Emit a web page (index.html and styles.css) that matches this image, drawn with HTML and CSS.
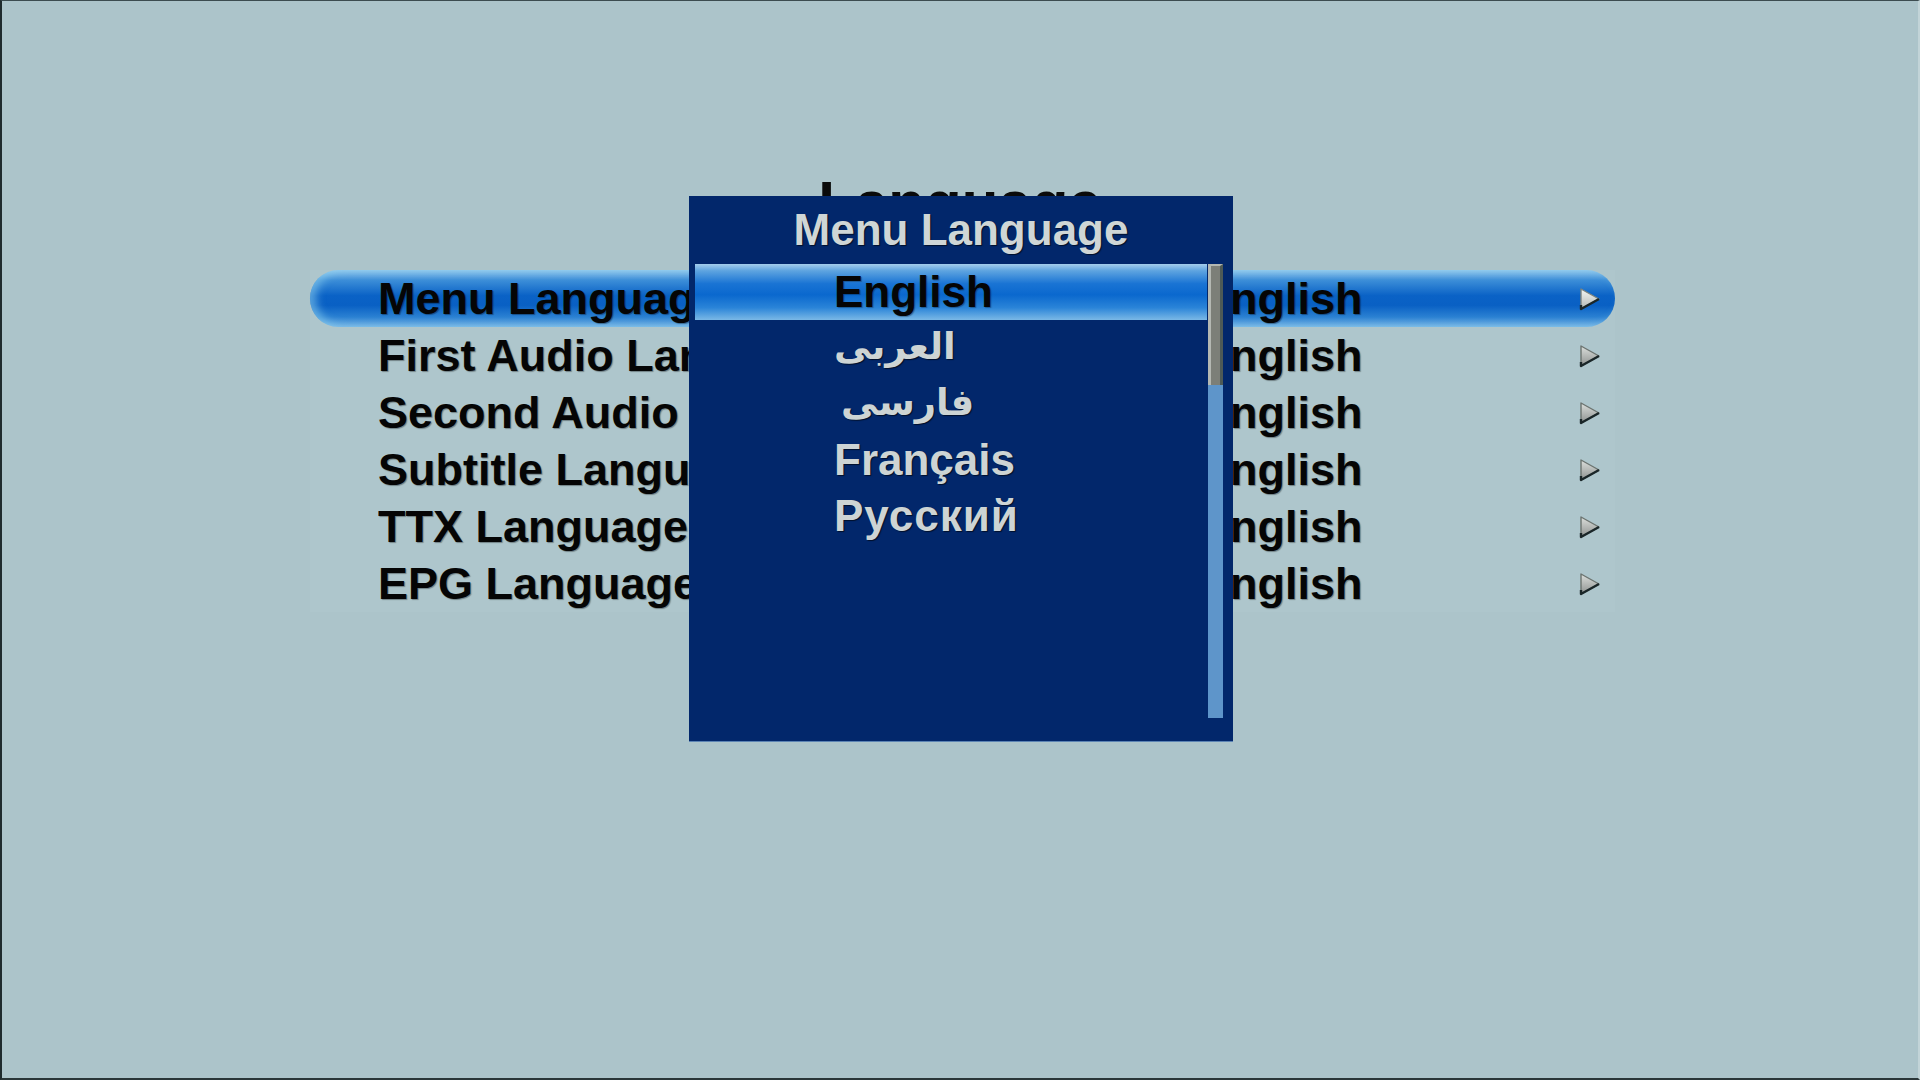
FILE: index.html
```html
<!DOCTYPE html>
<html lang="en">
<head>
<meta charset="utf-8">
<title>Language</title>
<link rel="stylesheet" href="styles.css">
</head>
<body>
<div class="screen">
  <h1 class="title">Language</h1>
  <div class="panel">
    <div class="row selected">
      <span class="label">Menu Language</span>
      <span class="value">English</span>
      <svg class="arrow" viewBox="0 0 24 26" width="24" height="26"><defs><linearGradient id="ag1" x1="0" y1="0" x2="0" y2="1"><stop offset="0" stop-color="#f4f6f4"/><stop offset="1" stop-color="#b4b8b4"/></linearGradient></defs><path d="M3 3 L21 13 L3 23 Z" fill="url(#ag1)" stroke="#7c8480" stroke-width="1.4" stroke-linejoin="round"/><path d="M21 13 L3 23 L3 19" fill="none" stroke="#1a2628" stroke-width="2.4" stroke-linejoin="round"/></svg>
    </div>
    <div class="row">
      <span class="label">First Audio Language</span>
      <span class="value">English</span>
      <svg class="arrow" viewBox="0 0 24 26" width="24" height="26"><defs><linearGradient id="ag2" x1="0" y1="0" x2="0" y2="1"><stop offset="0" stop-color="#dcdfdc"/><stop offset="1" stop-color="#8e9290"/></linearGradient></defs><path d="M3 3 L21 13 L3 23 Z" fill="url(#ag2)" stroke="#6c7470" stroke-width="1.4" stroke-linejoin="round"/><path d="M21 13 L3 23 L3 19" fill="none" stroke="#1a2628" stroke-width="2.4" stroke-linejoin="round"/></svg>
    </div>
    <div class="row">
      <span class="label">Second Audio Language</span>
      <span class="value">English</span>
      <svg class="arrow" viewBox="0 0 24 26" width="24" height="26"><path d="M3 3 L21 13 L3 23 Z" fill="url(#ag2)" stroke="#6c7470" stroke-width="1.4" stroke-linejoin="round"/><path d="M21 13 L3 23 L3 19" fill="none" stroke="#1a2628" stroke-width="2.4" stroke-linejoin="round"/></svg>
    </div>
    <div class="row">
      <span class="label">Subtitle Language</span>
      <span class="value">English</span>
      <svg class="arrow" viewBox="0 0 24 26" width="24" height="26"><path d="M3 3 L21 13 L3 23 Z" fill="url(#ag2)" stroke="#6c7470" stroke-width="1.4" stroke-linejoin="round"/><path d="M21 13 L3 23 L3 19" fill="none" stroke="#1a2628" stroke-width="2.4" stroke-linejoin="round"/></svg>
    </div>
    <div class="row">
      <span class="label">TTX Language</span>
      <span class="value">English</span>
      <svg class="arrow" viewBox="0 0 24 26" width="24" height="26"><path d="M3 3 L21 13 L3 23 Z" fill="url(#ag2)" stroke="#6c7470" stroke-width="1.4" stroke-linejoin="round"/><path d="M21 13 L3 23 L3 19" fill="none" stroke="#1a2628" stroke-width="2.4" stroke-linejoin="round"/></svg>
    </div>
    <div class="row">
      <span class="label">EPG Language</span>
      <span class="value">English</span>
      <svg class="arrow" viewBox="0 0 24 26" width="24" height="26"><path d="M3 3 L21 13 L3 23 Z" fill="url(#ag2)" stroke="#6c7470" stroke-width="1.4" stroke-linejoin="round"/><path d="M21 13 L3 23 L3 19" fill="none" stroke="#1a2628" stroke-width="2.4" stroke-linejoin="round"/></svg>
    </div>
  </div>

  <div class="popup">
    <div class="popup-title">Menu Language</div>
    <div class="popup-body">
      <ul class="options">
        <li class="option active">English</li>
        <li class="option arabic"><span dir="rtl">العربى</span></li>
        <li class="option arabic farsi"><span dir="rtl">فارسى</span></li>
        <li class="option">Français</li>
        <li class="option russian">Русский</li>
      </ul>
      <div class="scrollbar"><div class="thumb"></div></div>
    </div>
  </div>
</div>
</body>
</html>
```
FILE: styles.css
```css
html, body {
  margin: 0;
  padding: 0;
}
body {
  background: #acc4ca;
  font-family: "Liberation Sans", Arial, sans-serif;
  font-weight: bold;
}
.screen {
  position: relative;
  width: 1920px;
  height: 1080px;
  box-sizing: border-box;
  border-left: 2px solid #1f2b2d;
  border-top: 1px solid #3c4c50;
  border-bottom: 2px solid #2a3638;
  border-right: 2px solid #c2d4d8;
  padding-top: 172px;
  overflow: hidden;
}
.title {
  margin: 0;
  font-size: 60px;
  line-height: 60px;
  font-weight: bold;
  text-align: center;
  color: #0a0a0a;
}
.panel {
  margin-top: 37px;
  margin-left: 308px;
  width: 1305px;
  background: #aec6cc;
}
.row {
  display: flex;
  align-items: center;
  height: 57px;
  padding-left: 68px;
  font-size: 45px;
  color: #050505;
  text-shadow: 1px 1px 1px rgba(0, 0, 0, 0.35);
}
.row.selected {
  border-radius: 29px;
  background: linear-gradient(to bottom, #8fc6ec 0%, #3c8ed8 18%, #0a62c6 45%, #0960c4 62%, #2a80d2 82%, #72b2e4 100%);
  box-shadow: inset 6px 0 8px rgba(150, 215, 240, 0.55);
}
.label {
  width: 822px;
  white-space: nowrap;
  overflow: hidden;
}
.value {
  flex: 1;
  white-space: nowrap;
}
.arrow {
  margin-right: 13px;
  flex: none;
}

.popup {
  position: absolute;
  left: 687px;
  top: 195px;
  width: 544px;
  height: 545px;
  background: #02276b;
  box-shadow: 0 1px 0 #5c84b4;
  display: flex;
  flex-direction: column;
}
.popup-title {
  height: 68px;
  line-height: 68px;
  text-align: center;
  font-size: 44px;
  color: #cfd6d6;
  text-shadow: 1px 1px 1px rgba(0, 0, 0, 0.6);
}
.popup-body {
  display: flex;
  padding-left: 6px;
  padding-right: 10px;
}
.options {
  list-style: none;
  margin: 0;
  padding: 0;
  width: 512px;
}
.option {
  height: 56px;
  line-height: 56px;
  padding-left: 139px;
  font-size: 44px;
  color: #cdd4d4;
  text-shadow: 1px 1px 1px rgba(0, 0, 0, 0.6);
  white-space: nowrap;
}
.option.active {
  color: #050505;
  text-shadow: 1px 1px 1px rgba(0, 0, 0, 0.3);
  background: linear-gradient(to bottom, #a4cdec 0%, #5ea4e0 12%, #1a74d4 35%, #0a68ce 55%, #2a84d8 78%, #7ab8e6 100%);
}
.option.arabic {
  font-family: "DejaVu Sans", sans-serif;
  font-size: 37px;
  line-height: 54px;
}
.option.farsi {
  padding-left: 146px;
}
.option.russian {
  letter-spacing: 1px;
}
.scrollbar {
  width: 15px;
  height: 454px;
  background: #5e95ca;
  flex: none;
  margin-left: 1px;
}
.thumb {
  height: 121px;
  box-sizing: border-box;
  background: #7c7f78;
  border-left: 3px solid #b4b8b2;
  border-top: 2px solid #b4b8b2;
  border-right: 3px solid #4e5a56;
}
```
